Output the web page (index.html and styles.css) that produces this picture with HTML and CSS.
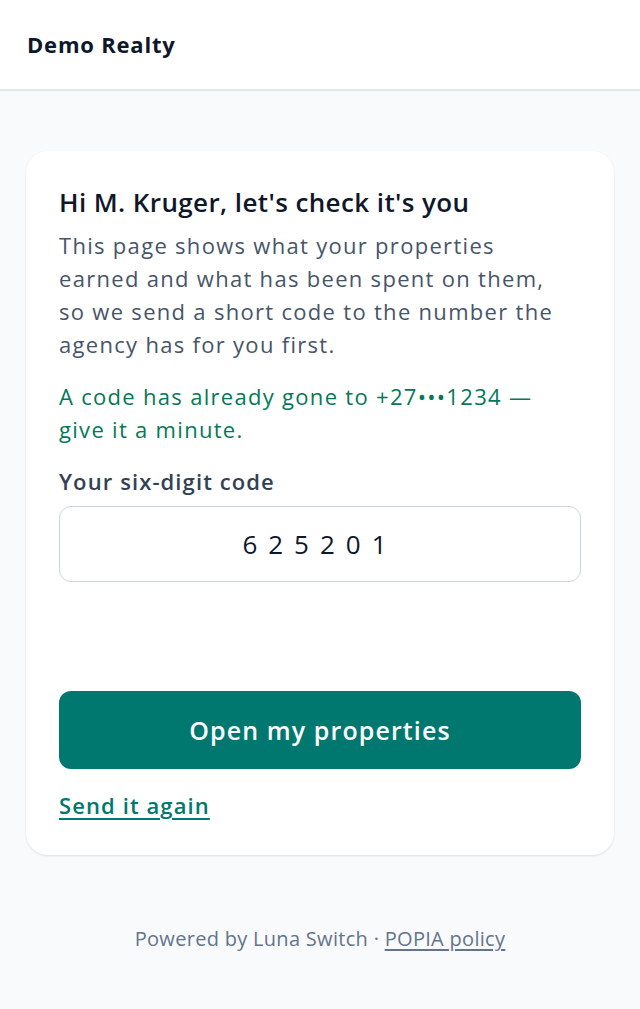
FILE: index.html
```html
<!DOCTYPE html>
<html lang="en">
<head>
    <meta charset="UTF-8">
    <meta name="viewport" content="width=device-width, initial-scale=1.0">
    <title>Demo Realty - Verify</title>
    <link rel="stylesheet" href="styles.css">
</head>
<body>
    <header class="topbar">
        <span class="brand">Demo Realty</span>
    </header>

    <main class="page">
        <div class="card">
            <h1>Hi M. Kruger, let's check it's you</h1>
            <p class="intro">This page shows what your properties earned and what has been spent on them, so we send a short code to the number the agency has for you first.</p>
            <p class="notice">A code has already gone to +27•••1234 — give it a minute.</p>

            <label for="code" class="field-label">Your six-digit code</label>
            <input type="text" id="code" class="code-input" value="625201" maxlength="6" inputmode="numeric">

            <button class="btn-primary">Open my properties</button>
            <a href="#" class="resend">Send it again</a>
        </div>

        <footer class="footer">
            Powered by Luna Switch · <a href="#">POPIA policy</a>
        </footer>
    </main>
</body>
</html>
```

FILE: styles.css
```css
* {
    box-sizing: border-box;
}
body {
    margin: 0;
    font-family: "Open Sans", sans-serif;
    background-color: #f8fafc;
    color: #0f172a;
}
.topbar {
    height: 91px;
    background-color: #ffffff;
    border-bottom: 2px solid #e2e8f0;
    display: flex;
    align-items: center;
    padding: 0 27px 2px 27px;
}
.brand {
    font-size: 22px;
    font-weight: 700;
    color: #0f172a;
    letter-spacing: 0.8px;
}
.page {
    padding: 60px 26px 40px 26px;
}
.card {
    background-color: #ffffff;
    border-radius: 22px;
    box-shadow: 0 1px 3px rgba(15, 23, 42, 0.08), 0 1px 2px rgba(15, 23, 42, 0.04);
    padding: 34px 33px 36px 33px;
}
h1 {
    margin: 0 0 10px 0;
    font-size: 26px;
    line-height: 34px;
    font-weight: 600;
    letter-spacing: 0.4px;
    color: #0f172a;
}
.intro,
.notice {
    max-width: 510px;
    font-size: 22px;
    line-height: 33px;
    letter-spacing: 1.3px;
}
.intro {
    margin: 0 0 19px 0;
    color: #475569;
}
.notice {
    margin: 0 0 21px 0;
    color: #047857;
}
.field-label {
    display: block;
    font-size: 22px;
    line-height: 28px;
    font-weight: 600;
    letter-spacing: 1.1px;
    color: #334155;
    margin-bottom: 11px;
}
.code-input {
    display: block;
    width: 100%;
    height: 76px;
    border: 1.5px solid #cbd5e1;
    border-radius: 12px;
    background: #ffffff;
    font-family: "Open Sans", sans-serif;
    font-size: 26px;
    letter-spacing: 11px;
    text-align: center;
    color: #0f172a;
    padding: 0;
    margin-bottom: 109px;
}
.btn-primary {
    display: block;
    width: 100%;
    height: 78px;
    border: none;
    border-radius: 12px;
    background-color: #00786f;
    color: #ffffff;
    font-family: "Open Sans", sans-serif;
    font-size: 25px;
    font-weight: 600;
    letter-spacing: 1.1px;
    cursor: pointer;
    margin-bottom: 22px;
}
.resend {
    display: inline-block;
    font-size: 22px;
    line-height: 28px;
    font-weight: 600;
    letter-spacing: 1.1px;
    color: #00786f;
    text-decoration: underline;
    text-underline-offset: 4px;
}
.footer {
    text-align: center;
    margin-top: 71px;
    font-size: 20px;
    line-height: 26px;
    letter-spacing: 0.3px;
    color: #64748b;
}
.footer a {
    color: #64748b;
    text-underline-offset: 3px;
}
```
